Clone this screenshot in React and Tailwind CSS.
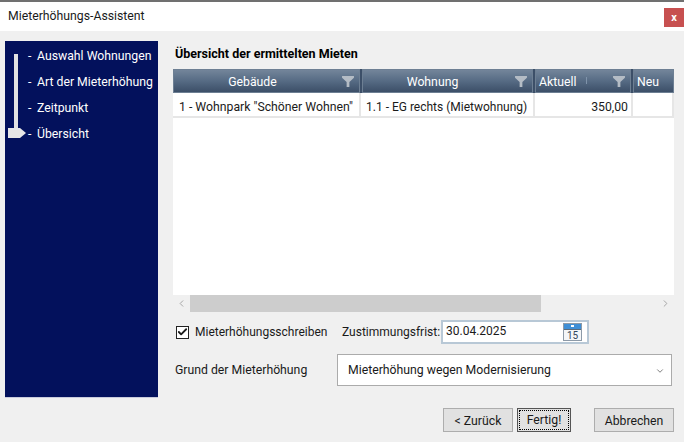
import { ChevronLeft, ChevronRight, ChevronDown, Check } from 'lucide-react'

function Funnel({ className }) {
  return (
    <svg viewBox="0 0 13 12" className={className}>
      <path d="M0 0H13V2L8 6.5V12H5V6.5L0 2Z" fill="#b4bcc5" />
    </svg>
  )
}

function HeadCell({ w, label, pad, filter, grip }) {
  return (
    <div className={`${w} relative h-full flex items-center border border-[#6d7f93] bg-gradient-to-b from-[#73859a] via-[#566b84] to-[#3c4f68] text-white pt-[2px] ${pad}`}>
      <span>{label}</span>
      {filter && <Funnel className="absolute right-[5px] top-[6px] w-[12px] h-[11px]" />}
      {grip && <span className="absolute right-[43px] top-[7px] w-px h-[7px] bg-[#7f93aa]" />}
    </div>
  )
}

function Cell({ w, children, right, className = 'px-[6px]' }) {
  return (
    <div className={`${w} h-full flex items-center border-r-2 border-b-2 border-[#e6e6e6] pt-[5px] ${className} ${right ? 'justify-end pr-[3px]' : ''}`}>
      {children}
    </div>
  )
}

export default function App() {
  const steps = ['Auswahl Wohnungen', 'Art der Mieterhöhung', 'Zeitpunkt', 'Übersicht']

  return (
    <div className="w-[684px] h-[442px] overflow-hidden flex flex-col bg-[#f0f0f0] text-[12.25px] text-[#1a1a1a] font-['Roboto','Open_Sans',sans-serif]">
      {/* Title bar */}
      <div className="h-[31px] shrink-0 bg-white border-t-2 border-[#707070] flex items-start justify-between pl-2 pr-0">
        <span className="mt-[5px] leading-[18px]">Mieterhöhungs-Assistent</span>
        <div className="mt-[6px] w-5 h-[19px] bg-[#c75050] flex items-center justify-center text-white text-[11px] font-bold leading-none">x</div>
      </div>

      <div className="flex-1 flex pt-[10px] pl-[5px] pr-[10px] gap-[15px]">
        {/* Steps */}
        <div className="relative w-[153px] h-[357px] shrink-0 bg-[#03115c] border-b border-[#c9cbdc] text-white pt-[2px]">
          <div className="absolute left-[9px] top-[13px] w-1 h-[75px] bg-[#e2e2e2]" />
          <svg viewBox="0 0 18 10" className="absolute left-[3px] top-[87px] w-[18px] h-[10px]">
            <path d="M0 0H12L18 5L12 10H0Z" fill="#e6e6e6" />
          </svg>
          {steps.map(s => (
            <div key={s} className="h-[26px] flex items-center whitespace-nowrap">
              <span className="ml-[23px] w-[9px] shrink-0">-</span>
              <span>{s}</span>
            </div>
          ))}
        </div>

        {/* Content */}
        <div className="flex-1 min-w-0 flex flex-col">
          <div className="h-[28px] pt-[4px] pl-[2px] font-bold text-[12.5px] leading-[18px] text-black">Übersicht der ermittelten Mieten</div>

          <div className="h-[243px] flex flex-col bg-white">
            <div className="h-6 flex gap-[2px] bg-[#3c4f68] shrink-0">
              <HeadCell w="w-[187px]" label="Gebäude" pad="justify-center pr-[28px]" filter />
              <HeadCell w="w-[171px]" label="Wohnung" pad="justify-center pr-[30px]" filter />
              <HeadCell w="w-[96px]" label="Aktuell" pad="pl-[3px]" filter grip />
              <HeadCell w="flex-1" label="Neu" pad="pl-[3px]" />
            </div>
            <div className="h-[25px] flex shrink-0">
              <Cell w="w-[188px]"><span className="whitespace-nowrap">1 - Wohnpark "Schöner Wohnen"</span></Cell>
              <Cell w="w-[174px]" className="px-[5px] text-[12px]"><span className="whitespace-nowrap">1.1 - EG rechts (Mietwohnung)</span></Cell>
              <Cell w="w-[98px]" right>350,00</Cell>
              <Cell w="flex-1"></Cell>
            </div>
            <div className="flex-1" />
            <div className="h-[17px] flex items-center bg-[#f0f0f0] shrink-0">
              <div className="w-[17px] flex justify-center text-[#a0a0a0]"><ChevronLeft size={11} /></div>
              <div className="w-[351px] h-full bg-[#cdcdcd]" />
              <div className="flex-1" />
              <div className="w-[17px] flex justify-center text-[#a0a0a0]"><ChevronRight size={11} /></div>
            </div>
          </div>

          <div className="h-[8px]" />
          <div className="h-[24px] flex items-center text-[12px]">
            <div className="ml-[3px] w-[13px] h-[13px] shrink-0 bg-white border border-[#222] flex items-center justify-center">
              <Check size={12} strokeWidth={4} className="text-[#1a1a1a]" />
            </div>
            <span className="ml-[6px] w-[147px] -mt-[1px] whitespace-nowrap">Mieterhöhungsschreiben</span>
            <span className="w-[99px] whitespace-nowrap">Zustimmungsfrist:</span>
            <div className="w-[148px] h-[24px] bg-white border-2 border-[#b8c8d6] flex items-center justify-between pl-[3px] pr-[5px]">
              <span className="-mt-[2px]">30.04.2025</span>
              <svg viewBox="0 0 19 18" className="w-[19px] h-[18px]">
                <rect x="0.5" y="0.5" width="18" height="17" fill="#f4f6f8" stroke="#8d9aa8" />
                <rect x="1" y="1" width="17" height="5" fill="#3f8fd6" />
                <rect x="8" y="2" width="3" height="2" fill="#fff" />
                <rect x="1" y="6" width="17" height="1" fill="#5c6b7a" />
                <text x="9.5" y="16" textAnchor="middle" fontSize="10" fontFamily="Roboto" fill="#33475c">15</text>
              </svg>
            </div>
          </div>

          <div className="h-[10px]" />
          <div className="h-[32px] flex items-center">
            <span className="ml-[2px] w-[162px] pt-px whitespace-nowrap">Grund der Mieterhöhung</span>
            <div className="w-[335px] h-[32px] pt-px bg-white border border-[#ababab] flex items-center justify-between pl-[10px] pr-[6px]">
              <span>Mieterhöhung wegen Modernisierung</span>
              <ChevronDown size={10} className="text-[#666]" />
            </div>
          </div>

          <div className="h-[22px]" />
          <div className="flex items-start">
            <button className="ml-[270px] w-[70px] h-[24px] pt-[2px] bg-[#e1e1e1] border border-[#adadad]">&lt; Zurück</button>
            <button className="ml-[4px] w-[54px] h-[24px] bg-[#e1e1e1] border border-[#555] p-px">
              <span className="h-full pt-[1px] flex items-center justify-center border border-dotted border-black">Fertig!</span>
            </button>
            <button className="ml-[23px] w-[80px] h-[24px] pt-[2px] bg-[#e1e1e1] border border-[#adadad]">Abbrechen</button>
          </div>
        </div>
      </div>
    </div>
  )
}
